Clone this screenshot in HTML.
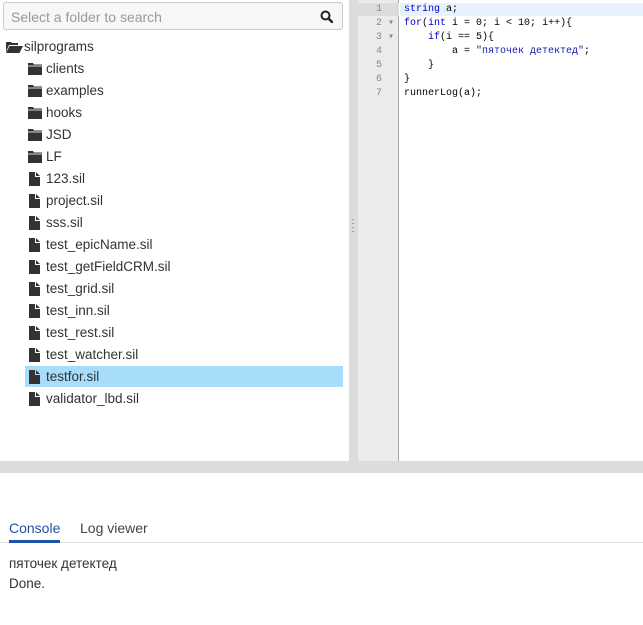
<!DOCTYPE html>
<html><head><meta charset="utf-8"><style>
*{margin:0;padding:0;box-sizing:border-box}
body{width:643px;height:625px;background:#fff;font-family:"Liberation Sans","Noto Sans CJK SC",sans-serif;position:relative;overflow:hidden;color:#333}
.abs{position:absolute}
.search{left:3px;top:2px;width:340px;height:28px;border:1px solid #ccc;border-radius:3px;background:#f7f7f7}
.search span{position:absolute;left:7px;top:6px;font-size:14px;color:#999}
.row{position:absolute;left:25px;width:318px;height:21px;font-size:13.5px;line-height:21px;padding-left:21px;color:#333}
.row.sel{background:#a8dcfb}
.ic{position:absolute;left:3px;top:5px}
.code{left:404px;top:3px;font-family:"Liberation Mono",monospace;font-size:10px;line-height:14px;white-space:pre;color:#000}
.ln{left:358px;top:3px;width:40px;font-family:"Liberation Mono",monospace;font-size:10px;line-height:14px;color:#888;text-align:right;white-space:pre;padding-right:4px}
.kw{color:#00c}.st{color:#1a1aa6}
</style></head><body>
<div class="abs search"><span>Select a folder to search</span>
<svg class="abs" style="right:9px;top:7px" width="13" height="13" viewBox="0 0 13 13"><circle cx="5.5" cy="5.5" r="4" fill="none" stroke="#222" stroke-width="2"/><path d="M8.5 8.5L12 12" stroke="#222" stroke-width="2.4" stroke-linecap="round"/></svg></div>
<div class="abs" style="left:349px;top:0;width:9px;height:461px;background:#dcdcdc"></div>
<div class="abs" style="left:352px;top:219px;width:2px;height:16px;background:repeating-linear-gradient(#999 0 1px,transparent 1px 4px)"></div>
<div class="abs" style="left:358px;top:0;width:41px;height:461px;background:#ebebeb;border-right:1px solid #aaa"></div>
<div class="abs" style="left:358px;top:3px;width:41px;height:13px;background:#dcdcdc"></div>
<div class="abs" style="left:400px;top:3px;width:243px;height:13px;background:#e8f2ff"></div>
<div class="abs" style="left:0;top:461px;width:643px;height:12px;background:#dcdcdc"></div>
<div class="abs ln">1  
2 ▾
3 ▾
4  
5  
6  
7  </div>
<div class="abs code"><span class="kw">string</span> a;
<span class="kw">for</span>(<span class="kw">int</span> i = 0; i &lt; 10; i++){
    <span class="kw">if</span>(i == 5){
        a = <span class="st">"пяточек детектед"</span>;
    }
}
runnerLog(a);</div>
<div class="row" style="left:4px;top:36px;padding-left:20px"><svg class="ic" style="left:2px" width="17" height="12" viewBox="0 0 17 12"><path d="M0 1h5l1 1h6v2H3L0 11z" fill="#333"/><path d="M3.5 5H17L13.5 12H0z" fill="#333"/></svg>silprograms</div>
<div id="t"></div>
<script>
var f=["clients","examples","hooks","JSD","LF"],s=["123.sil","project.sil","sss.sil","test_epicName.sil","test_getFieldCRM.sil","test_grid.sil","test_inn.sil","test_rest.sil","test_watcher.sil","testfor.sil","validator_lbd.sil"],h="",y=58;
var fi='<svg class="ic" width="14" height="12" viewBox="0 0 14 12"><path d="M0 0h5l1 1.5h8V12H0z" fill="#333"/><path d="M0 3h14" stroke="#fff" stroke-width=".8"/></svg>';
var fl='<svg class="ic" style="left:4px;top:4px" width="11" height="14" viewBox="0 0 11 14"><path d="M0 0h6v5h5v9H0z" fill="#333"/><path d="M7 0l4 4H7z" fill="#333"/></svg>';
f.forEach(function(n){h+='<div class="row" style="top:'+y+'px">'+fi+n+'</div>';y+=22});
s.forEach(function(n){h+='<div class="row'+(n=="testfor.sil"?' sel':'')+'" style="top:'+y+'px">'+fl+n+'</div>';y+=22});
document.getElementById('t').innerHTML=h;
</script>
<div class="abs" style="left:0;top:542px;width:643px;height:1px;background:#e4e4e4"></div>
<div class="abs" style="left:9px;top:520px;font-size:14px;color:#2051a8">Console</div>
<div class="abs" style="left:9px;top:540px;width:51px;height:3px;background:#2051a8"></div>
<div class="abs" style="left:80px;top:520px;font-size:14px;color:#444">Log viewer</div>
<div class="abs" style="left:9px;top:556px;font-size:13.5px;color:#333">пяточек детектед</div>
<div class="abs" style="left:9px;top:576px;font-size:13.5px;color:#333">Done.</div>
</body></html>
